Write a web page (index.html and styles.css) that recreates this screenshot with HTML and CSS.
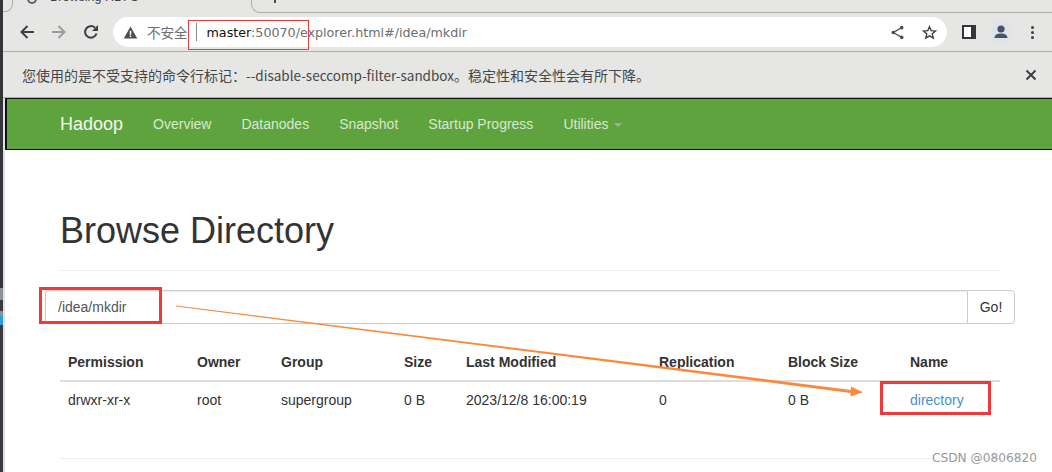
FILE: index.html
```html
<!DOCTYPE html>
<html lang="zh-CN">
<head>
    <meta charset="UTF-8">
    <title>Browsing HDFS</title>
    <link rel="stylesheet" href="styles.css">
</head>
<body>
    <div class="desk-edge"></div>
    <div class="window">
        <div class="tabstrip">
            <div class="tab-prev"></div>
            <div class="tab-active">
                <span class="tab-icon"></span>
                <span class="tab-title">Browsing HDFS</span>
            </div>
            <div class="tab-other">
                <span class="tab-stub"></span>
            </div>
        </div>

        <div class="toolbar">
            <div class="nav-buttons">
                <svg class="icon" viewBox="0 0 16 16"><path d="M15 8H2.500M8.500 2 2.500 8l6 6" fill="none" stroke="#3c4043" stroke-width="2"/></svg>
                <svg class="icon" viewBox="0 0 16 16"><path d="M1 8H13.500M7.500 2l6 6-6 6" fill="none" stroke="#9b9c9e" stroke-width="2"/></svg>
                <svg class="icon" viewBox="0 0 16 16"><path d="M13.500 9.500A5.800 5.800 0 1 1 12 3.800" fill="none" stroke="#3c4043" stroke-width="2"/><path d="M15 1v6H9z" fill="#3c4043"/></svg>
            </div>
            <div class="omnibox">
                <svg class="warn" viewBox="0 0 16 16"><path d="M8 1.500 15.200 14.500H.8z" fill="#4a4c4f"/><path d="M7.200 6h1.600v4.500H7.200zM7.200 11.300h1.600v1.600H7.200z" fill="#fff"/></svg>
                <span class="insecure">不安全</span>
                <span class="divider"></span>
                <span class="url"><b>master</b>:50070/explorer.html#/idea/mkdir</span>
                <span class="omni-actions">
                    <svg class="icon-sm" viewBox="0 0 16 16"><path d="M12.500 2.800 3.500 8l9 5.200" fill="none" stroke="#4a4c4f" stroke-width="1.300"/><circle cx="12.500" cy="2.800" r="1.900" fill="#4a4c4f"/><circle cx="3.500" cy="8" r="1.900" fill="#4a4c4f"/><circle cx="12.500" cy="13.200" r="1.900" fill="#4a4c4f"/></svg>
                    <svg class="icon-sm" viewBox="0 0 16 16"><path d="M8 1.800 9.800 6l4.600.4-3.500 3 1.100 4.500L8 11.500l-4 2.400 1.100-4.500-3.500-3L6.200 6z" fill="none" stroke="#3c4043" stroke-width="1.500"/></svg>
                </span>
            </div>
            <div class="browser-actions">
                <span class="panel-icon"></span>
                <span class="avatar">
                    <svg viewBox="0 0 22 22"><circle cx="11" cy="8" r="3.600" fill="#47536b"/><path d="M4.500 17c0-3.300 3-4.600 6.500-4.600s6.500 1.300 6.500 4.600z" fill="#47536b"/></svg>
                </span>
                <span class="menu-dots"><i></i><i></i><i></i></span>
            </div>
        </div>

        <div class="infobar">
            <span>您使用的是不受支持的命令行标记：<span class="flag">--disable-seccomp-filter-sandbox</span>。稳定性和安全性会有所下降。</span>
            <svg class="close" viewBox="0 0 12 12"><path d="M1.500 1.500l9 9M10.500 1.500l-9 9" fill="none" stroke="#3c4043" stroke-width="2"/></svg>
        </div>

        <nav class="navbar">
            <a class="brand" href="#">Hadoop</a>
            <a class="nav-link" href="#">Overview</a>
            <a class="nav-link" href="#">Datanodes</a>
            <a class="nav-link" href="#">Snapshot</a>
            <a class="nav-link" href="#">Startup Progress</a>
            <a class="nav-link" href="#">Utilities <span class="caret"></span></a>
        </nav>

        <main class="content">
            <h1 class="page-title">Browse Directory</h1>
            <div class="path-group">
                <div class="path-input">/idea/mkdir</div>
                <button class="go-btn">Go!</button>
            </div>
            <table class="listing">
                <thead>
                    <tr>
                        <th class="c-perm">Permission</th>
                        <th class="c-owner">Owner</th>
                        <th class="c-group">Group</th>
                        <th class="c-size">Size</th>
                        <th class="c-mod">Last Modified</th>
                        <th class="c-repl">Replication</th>
                        <th class="c-block">Block Size</th>
                        <th>Name</th>
                    </tr>
                </thead>
                <tbody>
                    <tr>
                        <td>drwxr-xr-x</td>
                        <td>root</td>
                        <td>supergroup</td>
                        <td>0 B</td>
                        <td>2023/12/8 16:00:19</td>
                        <td>0</td>
                        <td>0 B</td>
                        <td><a href="#">directory</a></td>
                    </tr>
                </tbody>
            </table>
            <hr class="foot-rule">
        </main>
    </div>

    <!-- annotations drawn on top of the screenshot -->
    <div class="mark mark-host"></div>
    <div class="mark mark-path"></div>
    <div class="mark mark-name"></div>
    <svg class="arrow" viewBox="0 0 1052 472">
        <path d="M176 305.400 L853 390.200 L852.600 393.200 L176 306.600z" fill="#f98a3c"/>
        <path d="M851 386.500 L863 392.300 L850.500 396.500z" fill="#f98a3c"/>
    </svg>
    <span class="watermark">CSDN @0806820</span>
</body>
</html>
```

FILE: styles.css
```css
* {
    box-sizing: border-box;
}
html, body {
    margin: 0;
    height: 472px;
    overflow: hidden;
}
body {
    position: relative;
    display: flex;
    background: #fff;
    font-family: "Liberation Sans", Arial, sans-serif;
    font-size: 14px;
    color: #333;
}
a {
    text-decoration: none;
}

/* sliver of the desktop left of the browser window */
.desk-edge {
    width: 3px;
    flex: none;
    background: linear-gradient(#34353a 288px, #8a9298 288px, #8a9298 300px, #3a3b40 300px, #3a3b40 311px, #8a9298 311px, #8a9298 316px, #2ba0d8 316px, #2ba0d8 325px, #3a3b40 325px);
}
.window {
    flex: 1;
    min-width: 0;
    display: flex;
    flex-direction: column;
    background: #e2dfe6;
}

/* browser chrome */
.tabstrip {
    height: 13px;
    flex: none;
    display: flex;
    background: #e6e6e5;
    overflow: hidden;
}
.tab-prev {
    width: 10px;
    flex: none;
    height: 12px;
    border-right: 1px solid #aeaeac;
    border-bottom: 1px solid #aeaeac;
    border-radius: 0 0 8px 0;
}
.tab-active {
    width: 238px;
    flex: none;
    display: flex;
    align-items: flex-end;
    gap: 13px;
    padding: 0 0 9px 14px;
    font-size: 12.500px;
    color: #3c4043;
}
.tab-icon {
    width: 10px;
    height: 10px;
    flex: none;
    margin-bottom: 0;
    border: 2px solid #5f6368;
    border-radius: 50%;
}
.tab-title {
    line-height: 14px;
    white-space: nowrap;
}
.tab-other {
    flex: 1;
    display: flex;
    padding-left: 22px;
    border-left: 1px solid #aeaeac;
    border-bottom: 1px solid #aeaeac;
    border-radius: 0 0 0 9px;
}
.tab-stub {
    width: 2px;
    height: 3px;
    background: #4a4c4f;
}
.toolbar {
    height: 39px;
    flex: none;
    display: flex;
    align-items: center;
    padding-left: 16px;
    background: #e6e6e5;
    border-bottom: 1px solid #aeaeac;
}
.nav-buttons {
    display: flex;
    gap: 16px;
    width: 94px;
}
.icon {
    width: 16px;
    height: 16px;
}
.omnibox {
    width: 834px;
    height: 30px;
    flex: none;
    display: flex;
    align-items: center;
    padding: 0 10px 0 10px;
    background: #fff;
    border-radius: 15px;
    font-family: "DejaVu Sans", sans-serif;
    font-size: 12.700px;
    color: #6b6e72;
}
.warn {
    width: 15px;
    height: 15px;
    margin-right: 9px;
}
.insecure {
    font-family: "Noto Sans CJK SC", sans-serif;
    font-size: 13.500px;
}
.divider {
    width: 1px;
    height: 18px;
    margin: 0 10px 0 8px;
    background: #85878a;
}
.url b {
    font-weight: 400;
    color: #111;
}
.omni-actions {
    margin-left: auto;
    display: flex;
    gap: 17px;
}
.icon-sm {
    width: 15px;
    height: 15px;
}
.browser-actions {
    display: flex;
    align-items: center;
    margin-left: 15px;
}
.panel-icon {
    width: 14px;
    height: 14px;
    background: #fff;
    border: 2px solid #33363a;
    border-right-width: 5px;
}
.avatar {
    width: 22px;
    height: 22px;
    margin-left: 14px;
    border-radius: 50%;
    background: #dfe3ea;
}
.avatar svg {
    display: block;
}
.menu-dots {
    margin-left: 19px;
    display: flex;
    flex-direction: column;
    gap: 2px;
}
.menu-dots i {
    width: 3px;
    height: 3px;
    border-radius: 50%;
    background: #3c4043;
}
.infobar {
    height: 46px;
    flex: none;
    display: flex;
    align-items: center;
    justify-content: space-between;
    padding: 0 15px 0 19px;
    background: #e6e6e5;
    border-bottom: 1px solid #aeaeac;
    font-family: "Noto Sans CJK SC", sans-serif;
    font-size: 14px;
    color: #45484b;
}
.flag {
    font-size: 13.500px;
}
.close {
    width: 12px;
    height: 12px;
}

/* hadoop page */
.navbar {
    height: 52px;
    flex: none;
    display: flex;
    align-items: center;
    margin-left: 2px;
    padding: 0 0 0 53px;
    background: #5fa33e;
    border: 1px solid #0d1409;
    border-left-width: 2px;
    border-right: 0;
    font-size: 14px;
}
.brand {
    margin-right: 30px;
    font-size: 18px;
    color: #f4f8f1;
}
.nav-link {
    margin-right: 30px;
    color: #d8e8d0;
}
.caret {
    display: inline-block;
    width: 0;
    height: 0;
    margin-left: 2px;
    vertical-align: middle;
    border-top: 4px solid #a3ad9d;
    border-left: 4px solid transparent;
    border-right: 4px solid transparent;
}
.content {
    flex: 1;
    margin-left: 2px;
    padding: 0 52px 0 55px;
    background: #fff;
}
.page-title {
    margin: 0;
    padding: 61px 0 19px;
    border-bottom: 1px solid #eee;
    font-size: 36px;
    font-weight: 400;
    line-height: 40px;
    color: #333;
}
.path-group {
    margin: 19px -15px 0 -15px;
    display: flex;
    height: 34px;
}
.path-input {
    flex: 1;
    padding: 6px 12px;
    line-height: 20px;
    color: #555;
    border: 1px solid #ccc;
    border-right: 0;
    border-radius: 4px 0 0 4px;
    box-shadow: inset 0 1px 1px rgba(0, 0, 0, .075);
}
.go-btn {
    width: 48px;
    padding: 0;
    font: inherit;
    color: #333;
    background: #fff;
    border: 1px solid #ccc;
    border-radius: 0 4px 4px 0;
}
.listing {
    width: 100%;
    margin-top: 20px;
    border-collapse: collapse;
    table-layout: fixed;
}
.listing th, .listing td {
    padding: 8px;
    text-align: left;
    line-height: 20px;
}
.listing th {
    border-bottom: 2px solid #ddd;
    font-weight: 700;
}
.listing a {
    color: #4a8fd0;
}
.c-perm { width: 129px; }
.c-owner { width: 84px; }
.c-group { width: 123px; }
.c-size { width: 62px; }
.c-mod { width: 193px; }
.c-repl { width: 129px; }
.c-block { width: 122px; }
.foot-rule {
    margin: 40px 0 0;
    border: 0;
    border-top: 1px solid #eee;
}

/* annotations */
.mark {
    position: absolute;
    border: 1px solid #f03a3a;
}
.mark-host {
    left: 188px;
    top: 20px;
    width: 121px;
    height: 30px;
}
.mark-path {
    left: 39px;
    top: 287px;
    width: 123px;
    height: 37px;
    border-width: 3px;
}
.mark-name {
    left: 880px;
    top: 381px;
    width: 111px;
    height: 34px;
    border-width: 3px;
}
.arrow {
    position: absolute;
    left: 0;
    top: 0;
    width: 1052px;
    height: 472px;
    pointer-events: none;
}
.watermark {
    position: absolute;
    right: 15px;
    top: 451px;
    font-family: "DejaVu Sans", sans-serif;
    font-size: 12.200px;
    color: #999;
    background: rgba(255, 255, 255, .5);
}
```
